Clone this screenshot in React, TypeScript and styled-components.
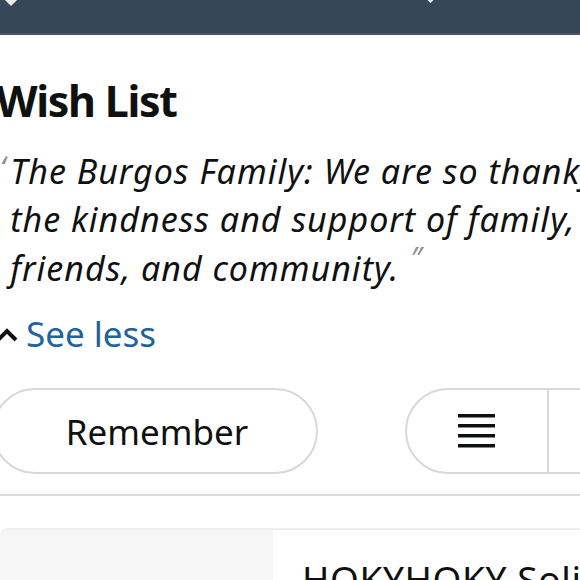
import React from "react";
import styled, { createGlobalStyle } from "styled-components";

const Global = createGlobalStyle`
  html, body { margin: 0; padding: 0; background: #fff; }
  body { width: 580px; height: 580px; overflow: hidden; font-family: "Noto Sans", "Liberation Sans", sans-serif; color: #0f1111; }
`;

const TopBar = styled.header`
  height: 33px;
  background: #37475a;
  border-bottom: 2px solid #4b5765;
  position: relative;
`;

const Nub = styled.span<{ $left: number; $size: number }>`
  position: absolute;
  top: ${(p) => -p.$size / 2 - 1}px;
  left: ${(p) => p.$left}px;
  width: ${(p) => p.$size}px;
  height: ${(p) => p.$size}px;
  background: #fff;
  transform: rotate(45deg);
  opacity: 0.9;
`;

const Page = styled.main`
  margin-left: -4px;
  width: 640px;
  display: flex;
  flex-direction: column;
`;

const Heading = styled.h1`
  margin: 40px 0 0 0;
  font-size: 43px;
  line-height: 52px;
  font-weight: 700;
  letter-spacing: -1.3px;
`;

const Quote = styled.p`
  margin: 20px 0 0 0;
  display: flex;
  gap: 5px;
  font-style: italic;
  font-size: 34px;
  letter-spacing: 1px;
  line-height: 48px;
  width: 660px;
`;

const Mark = styled.span`
  color: #8d9096;
  font-size: 30px;
  line-height: 1;
  font-style: italic;
  letter-spacing: 0;
`;

const OpenMark = styled(Mark)`
  margin-top: 6px;
  margin-left: 4px;
`;

const CloseMark = styled(Mark)`
  vertical-align: 12px;
  margin-left: 11px;
`;

const QuoteText = styled.span`
  flex: 1;
`;

const Line = styled.span`
  display: block;
  white-space: nowrap;
`;

const SeeLess = styled.a`
  margin-top: 20px;
  display: flex;
  align-items: center;
  gap: 8px;
  color: #2162a1;
  font-size: 35px;
  line-height: 44px;
  text-decoration: none;
`;

const Actions = styled.div`
  margin-top: 32px;
  display: flex;
  align-items: center;
  padding-bottom: 20px;
  border-bottom: 2px solid #dddddd;
  margin-left: -4px;
`;

const Pill = styled.button`
  height: 86px;
  border: 2px solid #d5d9d9;
  border-radius: 43px;
  background: #fff;
  font-family: inherit;
  color: #0f1111;
  font-size: 35px;
  flex-shrink: 0;
`;

const RememberPill = styled(Pill)`
  width: 326px;
  padding: 0 0 0 4px;
`;

const ViewPill = styled(Pill)`
  margin-left: 87px;
  width: 260px;
  display: flex;
  align-items: center;
  padding: 0;
  border-radius: 43px 0 0 43px;
`;

const ViewSegment = styled.span<{ $w: number; $divider?: boolean }>`
  width: ${(p) => p.$w}px;
  height: 100%;
  display: flex;
  align-items: center;
  justify-content: center;
  padding-right: ${(p) => (p.$divider ? 2 : 0)}px;
  box-sizing: border-box;
  border-right: ${(p) => (p.$divider ? "2px solid #d5d9d9" : "none")};
`;

const Card = styled.section`
  margin-top: 32px;
  margin-left: 4px;
  display: flex;
  height: 80px;
  border-top: 2px solid #eeeeee;
  border-radius: 8px 0 0 0;
  overflow: hidden;
`;

const Thumb = styled.div`
  width: 273px;
  flex-shrink: 0;
  background: #f6f6f6;
`;

const Title = styled.div`
  padding: 27px 0 0 29px;
  font-size: 37px;
  letter-spacing: 0.6px;
  line-height: 44px;
  white-space: nowrap;
`;

export default function App() {
  return (
    <>
      <Global />
      <TopBar>
        <Nub $left={6} $size={10} />
        <Nub $left={428} $size={5} />
      </TopBar>
      <Page>
        <Heading>Wish List</Heading>
        <Quote>
          <OpenMark>ʻ</OpenMark>
          <QuoteText>
            <Line>The Burgos Family: We are so thankful for</Line>
            <Line>the kindness and support of family,</Line>
            <Line>
              friends, and community.<CloseMark>″</CloseMark>
            </Line>
          </QuoteText>
        </Quote>
        <SeeLess href="#">
          <svg width="22" height="18" viewBox="0 0 22 18">
            <path d="M2 15 L11 6 L20 15" fill="none" stroke="#0f1111" strokeWidth="4" />
          </svg>
          See less
        </SeeLess>
        <Actions>
          <RememberPill>Remember</RememberPill>
          <ViewPill>
            <ViewSegment $w={142} $divider>
              <svg width="37" height="34" viewBox="0 0 37 34">
                <rect x="0" y="0" width="37" height="3.5" fill="#0f1111" />
                <rect x="0" y="10" width="37" height="3.5" fill="#0f1111" />
                <rect x="0" y="20" width="37" height="3.5" fill="#0f1111" />
                <rect x="0" y="30" width="37" height="3.5" fill="#0f1111" />
              </svg>
            </ViewSegment>
            <ViewSegment $w={100} />
          </ViewPill>
        </Actions>
        <Card>
          <Thumb />
          <Title>HOKYHOKY Solid Color Bath Towel</Title>
        </Card>
      </Page>
    </>
  );
}
